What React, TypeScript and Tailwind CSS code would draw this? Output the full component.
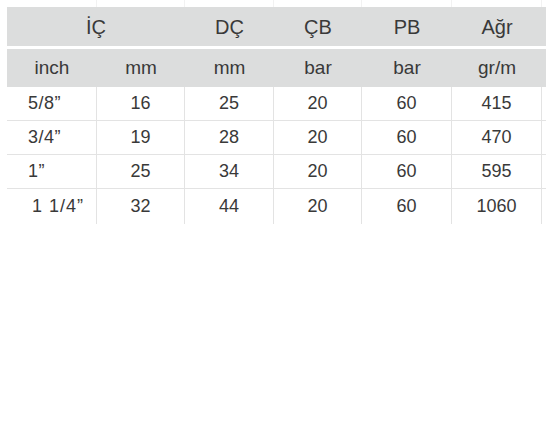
const widths = ['w-[90px]', 'w-[88px]', 'w-[89px]', 'w-[88px]', 'w-[90px]', 'w-[90px]'];

const units = ['inch', 'mm', 'mm', 'bar', 'bar', 'gr/m'];

const rows = [
  ['5/8”', '16', '25', '20', '60', '415'],
  ['3/4”', '19', '28', '20', '60', '470'],
  ['1”', '25', '34', '20', '60', '595'],
  ['1 1/4”', '32', '44', '20', '60', '1060'],
];

const App = () => {
  return (
    <div
      className="w-[546px] h-[445px] bg-white overflow-hidden text-[#393939]"
      style={{ fontFamily: '"Liberation Sans", Arial, sans-serif' }}
    >
      <div className="pl-[7px]">
        {/* faint lines above the header */}
        <div className="flex h-[7px]">
          {widths.map((w, i) => (
            <div key={i} className={`${w} shrink-0 border-r border-[#f2f2f2]`} />
          ))}
          <div className="flex-1" />
        </div>

        <div className="flex h-[39px] items-center bg-[#dcdddd] text-[20px]">
          <div className="w-[178px] shrink-0 text-center">İÇ</div>
          <div className="w-[89px] shrink-0 text-center">DÇ</div>
          <div className="w-[88px] shrink-0 text-center">ÇB</div>
          <div className="w-[90px] shrink-0 text-center">PB</div>
          <div className="w-[90px] shrink-0 text-center">Ağr</div>
          <div className="flex-1" />
        </div>

        <div className="flex h-[38px] items-center bg-[#dcdddd] mt-[3px] text-[19px]">
          {units.map((u, i) => (
            <div key={i} className={`${widths[i]} shrink-0 text-center`}>
              {u}
            </div>
          ))}
          <div className="flex-1" />
        </div>

        {rows.map((r, ri) => (
          <div
            key={ri}
            className={
              ri < rows.length - 1
                ? 'flex h-[34px] border-b border-[#e3e3e3] text-[18px]'
                : 'flex h-[35px] text-[18px]'
            }
          >
            {r.map((c, ci) =>
              ci === 0 ? (
                <div
                  key={ci}
                  className={`${widths[ci]} shrink-0 flex items-center border-r border-[#e3e3e3] ${
                    ri === 3 ? 'pl-[25px] tracking-[1px]' : 'pl-[21px] tracking-[0.5px]'
                  }`}
                >
                  {c}
                </div>
              ) : (
                <div
                  key={ci}
                  className={`${widths[ci]} shrink-0 flex items-center justify-center border-r border-[#e3e3e3]`}
                >
                  {c}
                </div>
              )
            )}
            <div className="flex-1" />
          </div>
        ))}
      </div>
    </div>
  );
};

export default App;
